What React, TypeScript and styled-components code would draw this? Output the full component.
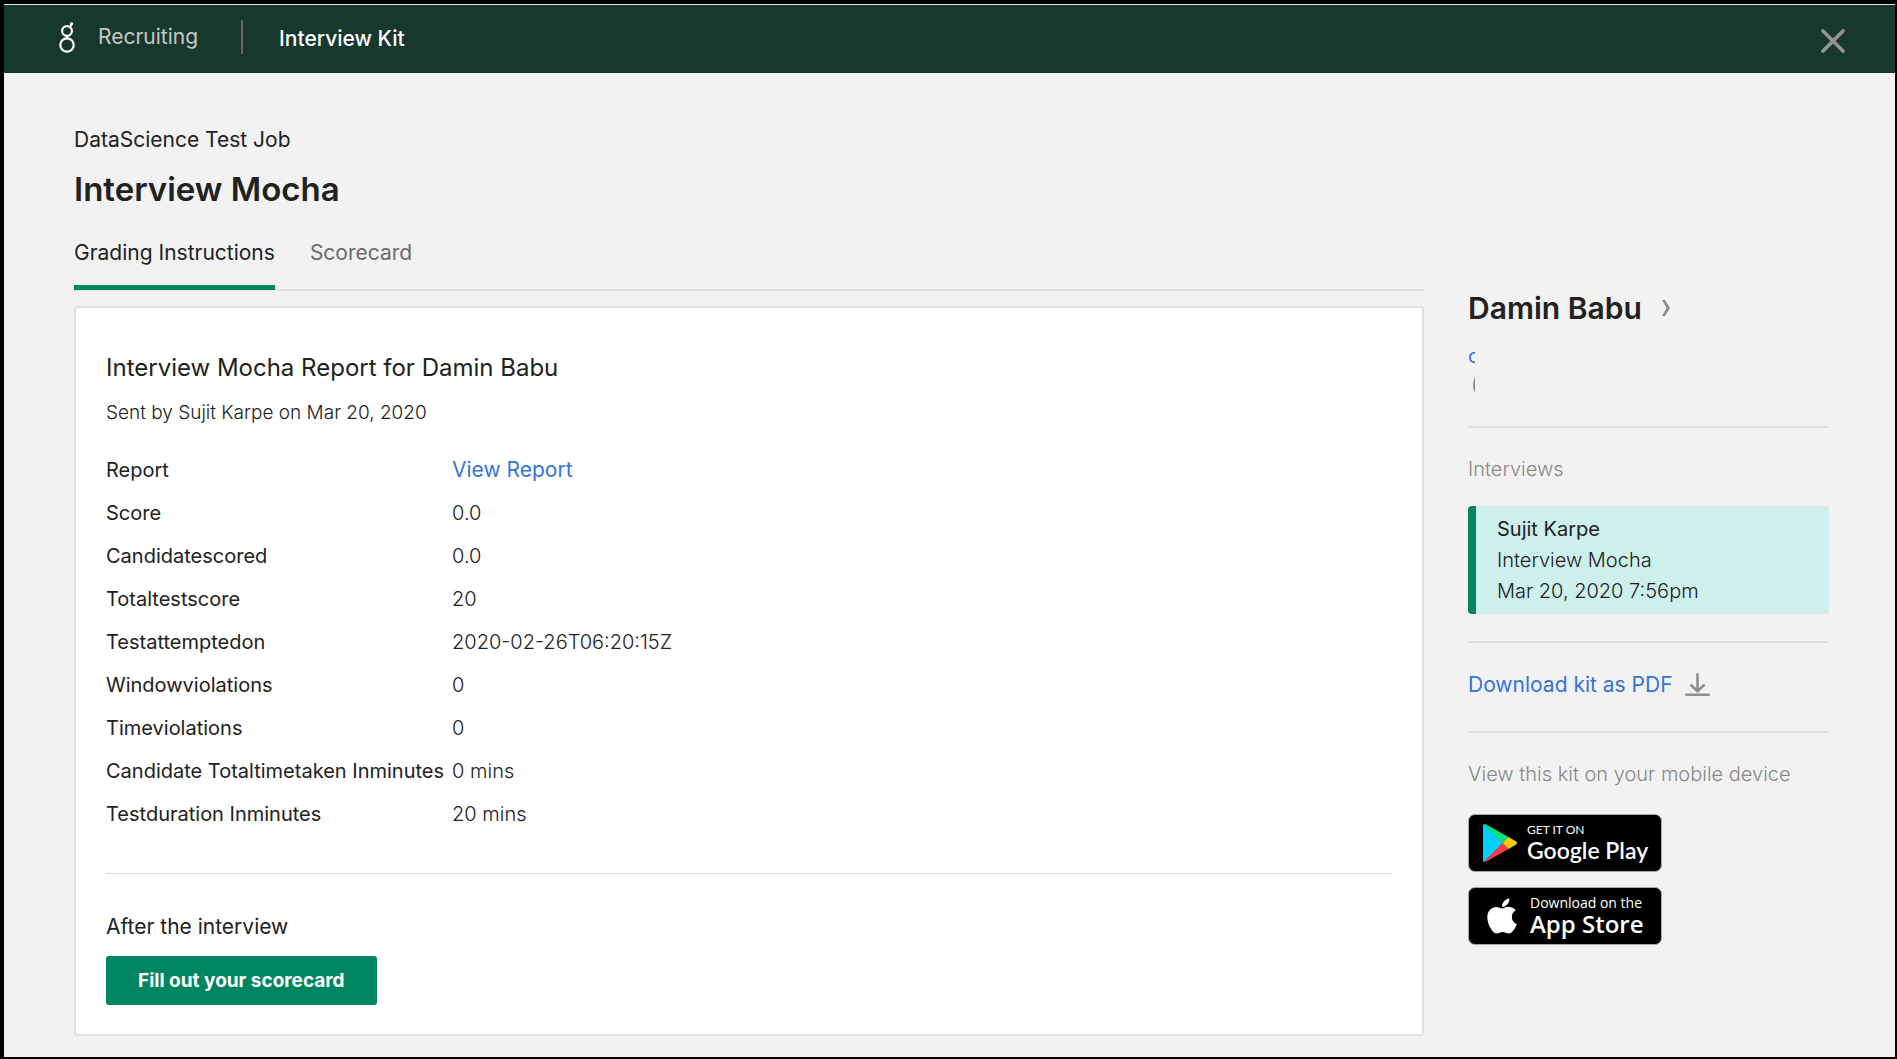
import React from "react";
import styled, { createGlobalStyle } from "styled-components";
import { FaApple } from "react-icons/fa";

const GlobalStyle = createGlobalStyle`
  *, *::before, *::after { box-sizing: border-box; }
  body {
    margin: 0;
    background: #000;
    color: #212121;
    font-family: Inter, "Liberation Sans", sans-serif;
    font-size: 20px;
    line-height: 28px;
  }
  h1, h2, h3, p { margin: 0; }
  a { color: #3574d6; text-decoration: none; }
`;

const Frame = styled.div`
  min-height: 100vh;
  display: flex;
  flex-direction: column;
  border: solid #000;
  border-width: 4px 2px 2px 4px;
  background: #f2f2f2;
`;

const TopBar = styled.header`
  display: flex;
  align-items: center;
  height: 69px;
  padding: 0 50px 0 55px;
  border-top: 1px solid #dfe3e1;
  background: #18372d;
  font-size: 21px;
`;

const Brand = styled.a`
  display: flex;
  align-items: center;
  gap: 23px;
  height: 34px;
  padding-right: 43px;
  margin-bottom: 4px;
  border-right: 2px solid #666;
  color: #c5c9c7;
`;

const KitName = styled.span`
  margin-left: 36px;
  color: #fff;
  font-weight: 500;
`;

const CloseButton = styled.button`
  display: flex;
  margin-left: auto;
  padding: 4px 0 0;
  border: 0;
  background: none;
  color: #949494;
  cursor: pointer;
`;

const Page = styled.div`
  flex: 1;
  display: grid;
  grid-template-columns: minmax(0, 1fr) 361px;
  column-gap: 44px;
  align-items: start;
  padding: 53px 66px 21px 70px;
`;

const JobName = styled.p`
  font-size: 21px;
`;

const Title = styled.h1`
  margin-top: 13px;
  font-size: 33px;
  line-height: 44px;
  font-weight: 600;
`;

const Tabs = styled.nav`
  display: flex;
  gap: 35px;
  margin-top: 28px;
  border-bottom: 2px solid #e1e1e1;
  font-size: 21px;
`;

const Tab = styled.a<{ $active?: boolean }>`
  padding-bottom: 18px;
  margin-bottom: -1px;
  border-bottom: 5px solid ${(p) => (p.$active ? "#008561" : "transparent")};
  color: ${(p) => (p.$active ? "#212121" : "#6b6b6b")};
`;

const Card = styled.section`
  margin-top: 15px;
  padding: 44px 29px 29px 30px;
  border: 2px solid #e1e1e1;
  border-radius: 4px;
  background: #fff;
`;

const ReportTitle = styled.h2`
  font-size: 24px;
  line-height: 32px;
  font-weight: 400;
`;

const SentBy = styled.p`
  margin-top: 15px;
  font-size: 19px;
  font-weight: 300;
`;

const Details = styled.table`
  margin-top: 21px;
  border-collapse: collapse;
  line-height: 43px;
`;

const Label = styled.th`
  min-width: 346px;
  padding: 0 8px 0 0;
  font-weight: 400;
  text-align: left;
  white-space: nowrap;
`;

const Value = styled.td`
  padding: 0;
  font-weight: 300;

  a {
    font-size: 21px;
    font-weight: 400;
  }
`;

const AfterInterview = styled.div`
  margin-top: 37px;
  padding-top: 39px;
  border-top: 1px solid #dedede;
  font-size: 21px;
`;

const PrimaryButton = styled.button`
  display: block;
  height: 49px;
  margin-top: 15px;
  padding: 0 32px;
  border: 0;
  border-radius: 3px;
  background: #008561;
  color: #fff;
  font-family: inherit;
  font-size: 19px;
  font-weight: 700;
  cursor: pointer;
`;

const Sidebar = styled.aside`
  padding-top: 162px;
`;

const Block = styled.section<{ $top?: number; $bottom?: number }>`
  padding: ${(p) => p.$top ?? 27}px 0 ${(p) => p.$bottom ?? 27}px;

  & + & { border-top: 2px solid #e1e1e1; }
`;

const Candidate = styled.h2`
  margin-bottom: 14px;
  font-size: 30px;
  line-height: 40px;
  font-weight: 600;

  a {
    display: flex;
    align-items: center;
    gap: 19px;
    color: inherit;
  }
`;

const Contact = styled.div`
  width: 7px;
  overflow: hidden;
  white-space: nowrap;
  color: #888;

  > * { display: block; }
  span { padding-left: 3px; }
`;

const Muted = styled.h3`
  font-size: 20px;
  font-weight: 300;
  color: #888;
`;

const Interview = styled.div`
  margin-top: 23px;
  padding: 8px 16px 7px 21px;
  border-left: 8px solid #008561;
  border-radius: 4px 0 0 4px;
  background: #cdf0ed;
  line-height: 31px;
  font-weight: 300;

  p:first-child { font-weight: 400; }
`;

const Download = styled.a`
  display: flex;
  align-items: center;
  gap: 12px;
  font-size: 21px;
`;

const Badges = styled.div`
  display: flex;
  flex-direction: column;
  align-items: flex-start;
  gap: 15px;
  margin-top: 26px;
`;

const Badge = styled.a<{ $face: string; $art: number }>`
  display: grid;
  grid-template-columns: ${(p) => p.$art}px auto;
  align-items: center;
  width: 194px;
  height: 58px;
  padding-left: 4px;
  border: 1px solid #a6a6a6;
  border-radius: 7px;
  background: #000;
  color: #fff;
  font-family: ${(p) => p.$face}, sans-serif;
  white-space: nowrap;

  svg { justify-self: center; }
`;

const BadgeText = styled.span`
  display: flex;
  flex-direction: column;
  padding-bottom: 3px;
`;

const BadgeSmall = styled.span<{ $size: number }>`
  font-size: ${(p) => p.$size}px;
  line-height: 17px;
`;

const BadgeLarge = styled.span<{ $size: number }>`
  font-size: ${(p) => p.$size}px;
  line-height: 25px;
  font-weight: 600;
`;

const GreenhouseMark = () => (
  <svg width="16" height="31" viewBox="0 0 16 31" fill="none" stroke="#fff" strokeWidth="2.2" aria-hidden="true">
    <circle cx="8" cy="9" r="4.9" />
    <circle cx="8" cy="23" r="6.7" />
    <path d="M8 14v2.3M10.6 5.2C12 4.2 12 3 12.5 1.8" />
    <circle cx="12.6" cy="1.8" r="1" fill="#fff" strokeWidth="1.2" />
  </svg>
);

const CloseIcon = () => (
  <svg width="24" height="24" viewBox="0 0 24 24" stroke="currentColor" strokeWidth="3.6" strokeLinecap="round" aria-hidden="true">
    <path d="M2 2l20 20M22 2L2 22" />
  </svg>
);

const Chevron = () => (
  <svg width="10" height="16" viewBox="0 0 10 16" fill="#8c8c8c" aria-hidden="true">
    <path d="M1 0h3l5 8-5 8H1l4.5-8z" />
  </svg>
);

const DownloadIcon = () => (
  <svg width="25" height="24" viewBox="0 0 25 24" fill="none" stroke="#8f8f8f" strokeWidth="2.6" strokeLinecap="round" strokeLinejoin="round" aria-hidden="true">
    <path d="M12.5 1.3V18M6.2 12.3l6.3 6 6.3-6M1.4 21.8h22.2" />
  </svg>
);

const PlayMark = () => (
  <svg width="34" height="38" viewBox="0 0 34 38" aria-hidden="true">
    <path d="M1 0Q0 .5 0 2v34q0 1.5 1 2l19-19z" fill="#00d2ff" />
    <path d="M1 0q1-.3 2.2.4L25.5 13 19.5 19z" fill="#00e676" />
    <path d="M1 38q1 .3 2.2-.4L25.5 25 19.5 19z" fill="#ff3a44" />
    <path d="M25.5 13l7.3 4.3q2.4 1.7 0 3.4L25.5 25l-6-6z" fill="#ffcb05" />
  </svg>
);

const details: [string, React.ReactNode][] = [
  ["Report", <a href="#report">View Report</a>],
  ["Score", "0.0"],
  ["Candidatescored", "0.0"],
  ["Totaltestscore", "20"],
  ["Testattemptedon", "2020-02-26T06:20:15Z"],
  ["Windowviolations", "0"],
  ["Timeviolations", "0"],
  ["Candidate Totaltimetaken Inminutes", "0 mins"],
  ["Testduration Inminutes", "20 mins"],
];

export default function App() {
  return (
    <>
      <GlobalStyle />
      <Frame>
        <TopBar>
          <Brand href="#recruiting">
            <GreenhouseMark />
            Recruiting
          </Brand>
          <KitName>Interview Kit</KitName>
          <CloseButton type="button" aria-label="Close">
            <CloseIcon />
          </CloseButton>
        </TopBar>
        <Page>
          <main>
            <JobName>DataScience Test Job</JobName>
            <Title>Interview Mocha</Title>
            <Tabs>
              <Tab href="#grading" $active>Grading Instructions</Tab>
              <Tab href="#scorecard">Scorecard</Tab>
            </Tabs>
            <Card>
              <ReportTitle>Interview Mocha Report for Damin Babu</ReportTitle>
              <SentBy>Sent by Sujit Karpe on Mar 20, 2020</SentBy>
              <Details>
                <tbody>
                  {details.map(([label, value]) => (
                    <tr key={label}>
                      <Label scope="row">{label}</Label>
                      <Value>{value}</Value>
                    </tr>
                  ))}
                </tbody>
              </Details>
              <AfterInterview>
                <p>After the interview</p>
                <PrimaryButton type="button">Fill out your scorecard</PrimaryButton>
              </AfterInterview>
            </Card>
          </main>
          <Sidebar>
            <Block $top={0} $bottom={28}>
              <Candidate>
                <a href="#candidate">
                  Damin Babu
                  <Chevron />
                </a>
              </Candidate>
              <Contact>
                <a href="#email">c</a>
                <span>(</span>
              </Contact>
            </Block>
            <Block>
              <Muted>Interviews</Muted>
              <Interview>
                <p>Sujit Karpe</p>
                <p>Interview Mocha</p>
                <p>Mar 20, 2020 7:56pm</p>
              </Interview>
            </Block>
            <Block $top={28} $bottom={32}>
              <Download href="#pdf">
                Download kit as PDF
                <DownloadIcon />
              </Download>
            </Block>
            <Block>
              <Muted>View this kit on your mobile device</Muted>
              <Badges>
                <Badge href="#google-play" $face="Lato" $art={54}>
                  <PlayMark />
                  <BadgeText>
                    <BadgeSmall $size={12}>GET IT ON</BadgeSmall>
                    <BadgeLarge $size={23}>Google Play</BadgeLarge>
                  </BadgeText>
                </Badge>
                <Badge href="#app-store" $face='"Open Sans"' $art={57}>
                  <FaApple size={40} aria-hidden="true" />
                  <BadgeText>
                    <BadgeSmall $size={14}>Download on the</BadgeSmall>
                    <BadgeLarge $size={24}>App Store</BadgeLarge>
                  </BadgeText>
                </Badge>
              </Badges>
            </Block>
          </Sidebar>
        </Page>
      </Frame>
    </>
  );
}
